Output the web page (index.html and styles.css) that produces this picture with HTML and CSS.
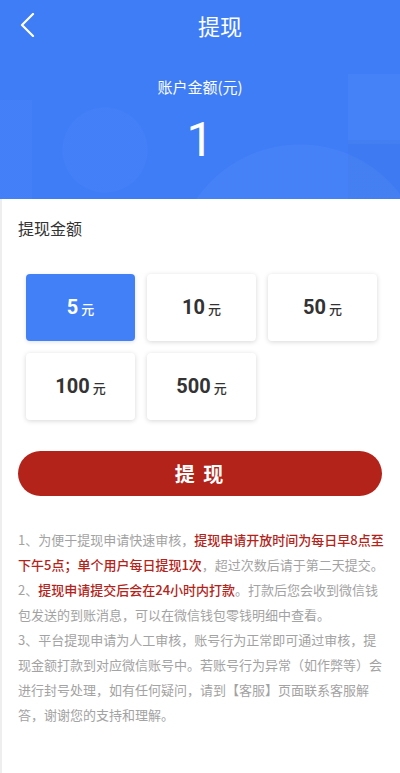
FILE: index.html
```html
<!DOCTYPE html>
<html lang="zh-CN">
<head>
<meta charset="utf-8">
<title>提现</title>
<link rel="stylesheet" href="styles.css">
</head>
<body>
<div class="page">
  <header class="header">
    <div class="nav">
      <div class="back">
        <svg width="16" height="24" viewBox="0 0 16 24"><path d="M13 1 L2 12 L13 23" fill="none" stroke="#fff" stroke-width="2.2" stroke-linecap="round" stroke-linejoin="round"/></svg>
      </div>
      <div class="title">提现</div>
    </div>
    <div class="balance-label">账户金额(元)</div>
    <div class="balance">1</div>
  </header>
  <main class="content">
    <div class="section-title">提现金额</div>
    <div class="amounts">
      <div class="amount active"><span class="num">5</span><span class="unit">元</span></div>
      <div class="amount"><span class="num">10</span><span class="unit">元</span></div>
      <div class="amount"><span class="num">50</span><span class="unit">元</span></div>
      <div class="amount"><span class="num">100</span><span class="unit">元</span></div>
      <div class="amount"><span class="num">500</span><span class="unit">元</span></div>
    </div>
    <div class="submit">提 现</div>
    <div class="notes">
      <div class="line">1、为便于提现申请快速审核，<span class="red">提现申请开放时间为每日早8点至</span></div>
      <div class="line"><span class="red">下午5点；单个用户每日提现1次</span>，超过次数后请于第二天提交。</div>
      <div class="line">2、<span class="red">提现申请提交后会在24小时内打款</span>。打款后您会收到微信钱</div>
      <div class="line">包发送的到账消息，可以在微信钱包零钱明细中查看。</div>
      <div class="line">3、平台提现申请为人工审核，账号行为正常即可通过审核，提</div>
      <div class="line">现金额打款到对应微信账号中。若账号行为异常（如作弊等）会</div>
      <div class="line">进行封号处理，如有任何疑问，请到【客服】页面联系客服解</div>
      <div class="line">答，谢谢您的支持和理解。</div>
    </div>
  </main>
</div>
</body>
</html>
```

FILE: styles.css
```css
html, body {
  margin: 0;
  padding: 0;
  background: #ffffff;
}
body {
  font-family: "Noto Sans CJK SC", "Noto Sans", Roboto, sans-serif;
  width: 400px;
  min-height: 773px;
}
.page {
  min-height: 773px;
  border-left: 2px solid #eeeeee;
  box-sizing: border-box;
}
.header {
  height: 199px;
  margin-left: -2px;
  background-color: #3f7df7;
  background-image:
    radial-gradient(circle at 300px 270px, rgba(255,255,255,0.035) 0 125px, transparent 126px),
    radial-gradient(circle at 105px 150px, rgba(255,255,255,0.025) 0 42px, transparent 43px),
    linear-gradient(rgba(255,255,255,0.03), rgba(255,255,255,0.03)),
    linear-gradient(rgba(0,0,0,0.02), rgba(0,0,0,0.02)),
    linear-gradient(rgba(255,255,255,0.025), rgba(255,255,255,0.025));
  background-size: auto, auto, 52px 70px, 52px 60px, 32px 100px;
  background-position: 0 0, 0 0, 348px 74px, 348px 140px, 0 100px;
  background-repeat: no-repeat;
  color: #ffffff;
  display: flex;
  flex-direction: column;
  align-items: center;
}
.nav {
  width: 100%;
  height: 50px;
  display: flex;
  align-items: center;
}
.back {
  width: 40px;
  height: 50px;
  display: flex;
  align-items: center;
  padding-left: 20px;
  box-sizing: border-box;
}
.title {
  flex: 1;
  text-align: center;
  font-size: 22px;
  line-height: 30px;
}
.balance-label {
  margin-top: 27px;
  font-size: 15px;
  line-height: 20px;
}
.balance {
  margin-top: 15px;
  font-family: Roboto, "Noto Sans", sans-serif;
  font-size: 48px;
  line-height: 56px;
  font-weight: 400;
}
.content {
  padding: 18px 16px 0 16px;
}
.section-title {
  font-size: 16px;
  line-height: 22px;
  color: #333333;
}
.amounts {
  margin-top: 35px;
  margin-left: 8px;
  display: grid;
  grid-template-columns: repeat(3, 109px);
  grid-auto-rows: 67px;
  gap: 12px;
}
.amount {
  background: #ffffff;
  border-radius: 4px;
  box-shadow: 0 1px 5px rgba(0,0,0,0.16);
  display: flex;
  align-items: baseline;
  justify-content: center;
  padding-top: 21px;
  box-sizing: border-box;
  color: #333333;
}
.amount.active {
  background: #4280f7;
  color: #ffffff;
  box-shadow: 0 1px 4px rgba(0,0,0,0.12);
}
.num {
  font-family: Roboto, "Noto Sans", sans-serif;
  font-weight: 700;
  font-size: 20px;
  line-height: 24px;
}
.unit {
  font-size: 13px;
  margin-left: 3px;
  font-weight: 500;
}
.submit {
  margin-top: 31px;
  width: 364px;
  height: 45px;
  border-radius: 23px;
  background: #b3231a;
  color: #ffffff;
  font-size: 20px;
  font-weight: 700;
  display: flex;
  align-items: center;
  justify-content: center;
  letter-spacing: 2px;
}
.notes {
  margin-top: 31px;
  font-size: 13px;
  line-height: 25px;
  color: #a3a3a3;
}
.line {
  white-space: nowrap;
}
.red {
  color: #b3231a;
  font-weight: 500;
}
```
